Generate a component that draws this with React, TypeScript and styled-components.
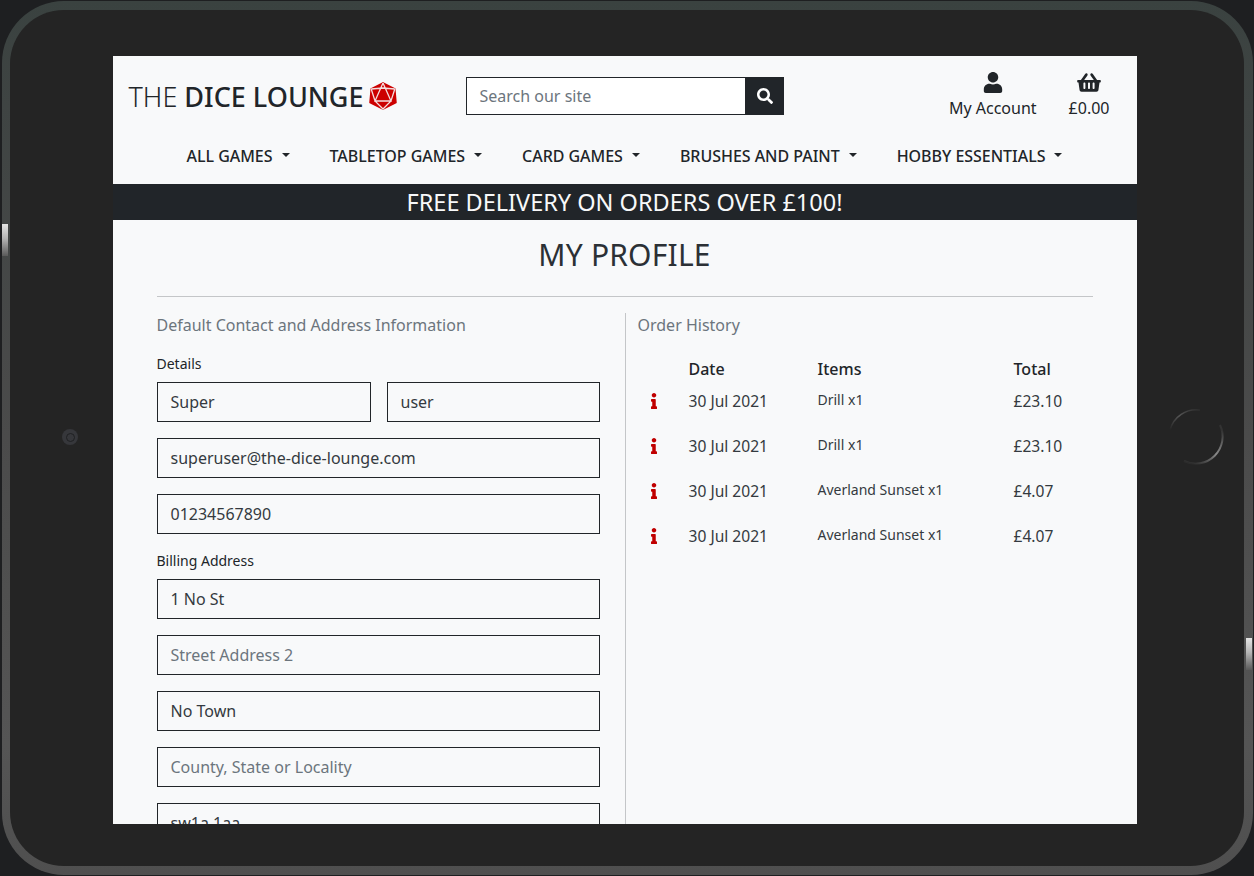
import React from "react";
import styled, { createGlobalStyle } from "styled-components";
import { FaInfo, FaSearch, FaShoppingBasket, FaUser } from "react-icons/fa";

const GlobalStyle = createGlobalStyle`
  html, body {
    margin: 0;
    padding: 0;
    background: #1e1f21;
    overflow: hidden;
  }
  * {
    box-sizing: border-box;
  }
`;

const Bezel = styled.div`
  position: relative;
  width: 1254px;
  height: 876px;
  padding: 1px 1px 1px 2px;
  background: #1e1f21;
`;

const Rim = styled.div`
  height: 100%;
  padding: 9px 9px 9px 8px;
  border-radius: 62px;
  background: linear-gradient(180deg, #3a4240 0%, #3f4443 12%, #4b4b4b 50%, #555 85%, #4f4f4f 100%);
`;

const Face = styled.div`
  height: 100%;
  display: flex;
  justify-content: center;
  padding: 46px 5px 42px 0;
  border-radius: 54px;
  background: #242424;
`;

const Screen = styled.div`
  width: 1024px;
  height: 768px;
  overflow: hidden;
  background: #f8f9fa;
  color: #212529;
  font-family: "Noto Sans", "Open Sans", sans-serif;
`;

const SideButton = styled.div<{ $side: "left" | "right"; $top: number }>`
  position: absolute;
  top: ${(p) => p.$top}px;
  ${(p) => p.$side}: 2px;
  width: 6px;
  height: 32px;
  background: linear-gradient(180deg, #e4e4e4 0%, #b5b5b5 45%, #5a5a5a 100%);
`;

const Camera = styled.div`
  position: absolute;
  left: 62px;
  top: 429px;
  width: 16px;
  height: 16px;
  border-radius: 50%;
  background: #36373b;
  display: flex;
  align-items: center;
  justify-content: center;

  &::after {
    content: "";
    width: 7px;
    height: 7px;
    border-radius: 50%;
    border: 1px solid #1f2022;
  }
`;

const HomeRing = styled.svg`
  position: absolute;
  left: 1166px;
  top: 407px;
`;

const TopRow = styled.div`
  display: flex;
  height: 80px;
  padding: 0 27px 0 16px;
`;

const Logo = styled.div`
  width: 337px;
  display: flex;
  align-items: center;
  gap: 6px;
  font-size: 27px;
  height: 80px;

  span {
    font-weight: 300;
  }

  strong {
    font-weight: 500;
  }
`;

const Search = styled.div`
  display: flex;
  width: 318px;
  height: 38px;
  margin-top: 21px;
`;

const SearchInput = styled.div`
  flex: 1;
  display: flex;
  align-items: center;
  padding: 0 12px 0 13px;
  background: #fff;
  border: 1px solid #212529;
  color: #6c757d;
  font-size: 16px;
`;

const SearchButton = styled.div`
  width: 38px;
  display: flex;
  align-items: center;
  justify-content: center;
  background: #212529;
  color: #fff;
  font-size: 16px;
`;

const Actions = styled.div`
  margin-left: auto;
  display: flex;
  gap: 32px;
  padding-top: 16px;
`;

const Action = styled.div`
  display: flex;
  flex-direction: column;
  align-items: center;
  gap: 4px;
  font-size: 16px;
  line-height: 22px;

  svg {
    display: block;
    width: 24px;
    height: 21px;
    color: #212529;
  }
`;

const Nav = styled.nav`
  display: flex;
  justify-content: center;
  gap: 40px;
  height: 48px;
  padding-top: 8px;
`;

const NavItem = styled.div`
  display: flex;
  align-items: center;
  height: 24px;
  font-size: 16px;
  font-weight: 500;
  letter-spacing: -0.03px;

  &::after {
    content: "";
    margin-left: 9px;
    margin-top: -2px;
    border-top: 4.8px solid #212529;
    border-left: 4.8px solid transparent;
    border-right: 4.8px solid transparent;
  }
`;

const Banner = styled.div`
  height: 36px;
  background: #212529;
  color: #f8f9fa;
  font-size: 23.5px;
  line-height: 36px;
  font-weight: 400;
  text-align: center;
  white-space: nowrap;
`;

const Main = styled.main`
  padding: 0 44px;
`;

const Title = styled.h1`
  margin: 0;
  height: 77px;
  padding-top: 14px;
  font-size: 30px;
  line-height: 42px;
  font-weight: 400;
  letter-spacing: 0.2px;
  text-align: center;
  color: #2b3035;
  border-bottom: 1px solid #c4c6c8;
`;

const Columns = styled.div`
  display: grid;
  grid-template-columns: 469px 1fr;
  margin-top: 16px;
`;

const LeftCol = styled.section`
  padding-right: 25px;
  border-right: 1px solid #c4c6c8;
`;

const RightCol = styled.section`
  padding-left: 12px;
`;

const SectionHead = styled.h2`
  margin: 0 0 16px;
  font-size: 16px;
  line-height: 24px;
  font-weight: 400;
  color: #6c757d;
`;

const Label = styled.div`
  font-size: 14px;
  line-height: 21px;
  margin-bottom: 8px;
`;

const Row = styled.div`
  display: grid;
  grid-template-columns: 214px 1fr;
  gap: 16px;
`;

const Field = styled.div<{ $placeholder?: boolean }>`
  height: 40px;
  margin-bottom: 16px;
  padding: 0 12px 0 13px;
  display: flex;
  align-items: center;
  border: 1px solid #212529;
  font-size: 16px;
  color: ${(p) => (p.$placeholder ? "#6c757d" : "#343a40")};
`;

const Orders = styled.div`
  display: grid;
  grid-template-columns: 51px 129px 196px 1fr;
  margin-top: 19px;
`;

const Head = styled.div`
  height: 26px;
  font-size: 16px;
  line-height: 26px;
  font-weight: 500;
`;

const HeadRow = styled.div`
  grid-column: 1 / -1;
  display: grid;
  grid-template-columns: subgrid;
  height: 25px;
`;

const OrderRow = styled.div`
  grid-column: 1 / -1;
  display: grid;
  grid-template-columns: subgrid;
  height: 45px;
  padding-top: 8px;
  font-size: 15.6px;
  line-height: 24px;
  color: #343a40;
`;

const InfoCell = styled.div`
  padding: 4px 0 0 8px;
  color: #c00000;

  svg {
    display: block;
    width: 16px;
    height: 16px;
  }
`;

const ItemsCell = styled.div`
  font-size: 14px;
  line-height: 21px;
`;

const Dice = () => (
  <svg width="28" height="28" viewBox="0 0 28 28">
    <polygon points="14,0.8 25.8,7 27,20.5 14,27.2 1,20.5 2.2,7" fill="#cc0000" stroke="#cc0000" strokeWidth="1.5" strokeLinejoin="round" />
    <g stroke="#f4dede" strokeWidth="1.3" fill="none">
      <path d="M14 1 6 19 22 19 14 1 M2.2 7 14 6 25.8 7 M2.2 7 6 19 14 27 22 19 25.8 7" />
    </g>
  </svg>
);

const orders = [
  { date: "30 Jul 2021", items: "Drill x1", total: "£23.10" },
  { date: "30 Jul 2021", items: "Drill x1", total: "£23.10" },
  { date: "30 Jul 2021", items: "Averland Sunset x1", total: "£4.07" },
  { date: "30 Jul 2021", items: "Averland Sunset x1", total: "£4.07" },
];

const navItems = ["ALL GAMES", "TABLETOP GAMES", "CARD GAMES", "BRUSHES AND PAINT", "HOBBY ESSENTIALS"];

const App = () => {
  return (
    <>
      <GlobalStyle />
      <Bezel>
        <Rim>
          <Face>
            <Screen>
              <TopRow>
                <Logo>
                  <span>
                    THE <strong>DICE LOUNGE</strong>
                  </span>
                  <Dice />
                </Logo>
                <Search>
                  <SearchInput>Search our site</SearchInput>
                  <SearchButton>
                    <FaSearch />
                  </SearchButton>
                </Search>
                <Actions>
                  <Action>
                    <FaUser />
                    My Account
                  </Action>
                  <Action>
                    <FaShoppingBasket />
                    £0.00
                  </Action>
                </Actions>
              </TopRow>
              <Nav>
                {navItems.map((item) => (
                  <NavItem key={item}>{item}</NavItem>
                ))}
              </Nav>
              <Banner>FREE DELIVERY ON ORDERS OVER £100!</Banner>
              <Main>
                <Title>MY PROFILE</Title>
                <Columns>
                  <LeftCol>
                    <SectionHead>Default Contact and Address Information</SectionHead>
                    <Label>Details</Label>
                    <Row>
                      <Field>Super</Field>
                      <Field>user</Field>
                    </Row>
                    <Field>superuser@the-dice-lounge.com</Field>
                    <Field>01234567890</Field>
                    <Label>Billing Address</Label>
                    <Field>1 No St</Field>
                    <Field $placeholder>Street Address 2</Field>
                    <Field>No Town</Field>
                    <Field $placeholder>County, State or Locality</Field>
                    <Field>sw1a 1aa</Field>
                  </LeftCol>
                  <RightCol>
                    <SectionHead>Order History</SectionHead>
                    <Orders>
                      <HeadRow>
                        <span />
                        <Head>Date</Head>
                        <Head>Items</Head>
                        <Head>Total</Head>
                      </HeadRow>
                      {orders.map((order, i) => (
                        <OrderRow key={i}>
                          <InfoCell>
                            <FaInfo />
                          </InfoCell>
                          <div>{order.date}</div>
                          <ItemsCell>{order.items}</ItemsCell>
                          <div>{order.total}</div>
                        </OrderRow>
                      ))}
                    </Orders>
                  </RightCol>
                </Columns>
              </Main>
            </Screen>
          </Face>
        </Rim>
        <SideButton $side="left" $top={224} />
        <SideButton $side="right" $top={638} />
        <Camera />
        <HomeRing width="60" height="60" viewBox="0 0 60 60" fill="none">
          <defs>
            <linearGradient id="ringDim" x1="0" y1="1" x2="1" y2="0">
              <stop offset="0" stopColor="#242424" />
              <stop offset="0.5" stopColor="#555" />
              <stop offset="1" stopColor="#2c2c2c" />
            </linearGradient>
            <linearGradient id="ringBright" x1="0.5" y1="0" x2="0.2" y2="1">
              <stop offset="0" stopColor="#333" />
              <stop offset="0.6" stopColor="#8a8a8a" />
              <stop offset="1" stopColor="#2c2c2c" />
            </linearGradient>
          </defs>
          <path d="M4 23 A27 27 0 0 1 34 3" stroke="url(#ringDim)" strokeWidth="1.5" />
          <path d="M54 18 A27 27 0 0 1 18 54" stroke="url(#ringBright)" strokeWidth="2" />
        </HomeRing>
      </Bezel>
    </>
  );
};

export default App;
